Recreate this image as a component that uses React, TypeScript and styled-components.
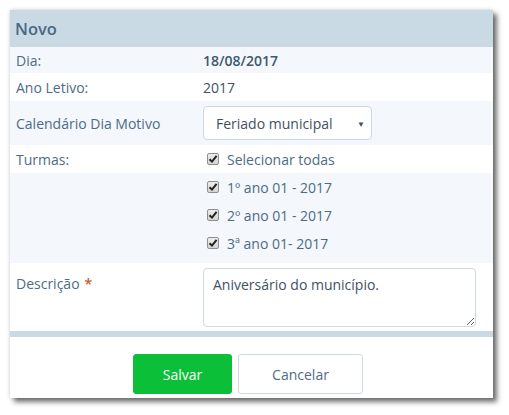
import React from "react";
import styled, { createGlobalStyle } from "styled-components";

const Global = createGlobalStyle`
  html, body { margin: 0; padding: 0; background: #ffffff; }
  body { font-family: "Open Sans", "Liberation Sans", sans-serif; }
  * { box-sizing: border-box; }
`;

const Page = styled.div`
  padding: 10px 16px 17px 10px;
  width: 509px;
`;

const Panel = styled.div`
  width: 483px;
  background: #ffffff;
  box-shadow: 4px 4px 5px rgba(0, 0, 0, 0.55), 0 0 4px rgba(0, 0, 0, 0.18);
`;

const Header = styled.div`
  height: 37px;
  background: #c9dae5;
  display: flex;
  align-items: center;
  padding-left: 5px;
  font-size: 16.5px;
  font-weight: 600;
  color: #4a6982;
`;

const Row = styled.div<{ $alt?: boolean; $h?: number; $pad?: string }>`
  display: grid;
  grid-template-columns: 193px 1fr;
  align-items: ${(p) => (p.$pad ? "start" : "center")};
  min-height: ${(p) => p.$h ?? 27}px;
  padding: ${(p) => p.$pad ?? "0"};
  background: ${(p) => (p.$alt ? "#f4f7fb" : "#ffffff")};
`;

const Label = styled.div<{ $top?: number }>`
  padding-left: 6px;
  font-size: 14px;
  color: #4e6b85;
  padding-top: ${(p) => p.$top ?? 0}px;
`;

const Value = styled.div<{ $bold?: boolean }>`
  font-size: 14px;
  color: ${(p) => (p.$bold ? "#3d5870" : "#3f5163")};
  font-weight: ${(p) => (p.$bold ? 600 : 400)};
`;

const Select = styled.div`
  width: 169px;
  height: 34px;
  border: 1px solid #ccd8e3;
  border-radius: 4px;
  background: #fff;
  display: flex;
  align-items: center;
  justify-content: space-between;
  padding: 0 6px 0 12px;
  font-size: 14px;
  color: #3f5163;
`;

const Arrow = styled.span`
  font-size: 8px;
  color: #3f5163;
`;

const CheckList = styled.div`
  display: flex;
  flex-direction: column;
`;

const CheckItem = styled.label`
  display: flex;
  align-items: center;
  gap: 8px;
  height: 28px;
  padding-left: 4px;
  font-size: 14px;
  color: #4e6b85;
`;

const Box = styled.span`
  width: 12px;
  height: 12px;
  border: 1px solid #8f8f8f;
  border-radius: 2px;
  background: linear-gradient(#ececec, #d4d4d4);
  display: inline-flex;
  align-items: center;
  justify-content: center;
`;

const Check = () => (
  <Box>
    <svg width="10" height="10" viewBox="0 0 10 10">
      <path d="M1.5 5.2 L4 7.6 L8.6 1.8" fill="none" stroke="#222" strokeWidth="2" />
    </svg>
  </Box>
);

const Required = styled.span`
  color: #c0642a;
  font-weight: 600;
  margin-left: 5px;
`;

const TextArea = styled.textarea`
  width: 273px;
  height: 59px;
  border: 1px solid #ccd8e3;
  border-radius: 4px;
  padding: 6px 9px;
  font-family: "Open Sans", "Liberation Sans", sans-serif;
  font-size: 14px;
  color: #3f5163;
  resize: both;
  display: block;
  outline: none;
`;

const Separator = styled.div`
  height: 6px;
  background: #c9dae5;
`;

const Footer = styled.div`
  height: 61px;
  display: flex;
  justify-content: center;
  align-items: flex-start;
  gap: 6px;
  padding-top: 17px;
  padding-right: 7px;
`;

const Button = styled.button<{ $primary?: boolean }>`
  height: 40px;
  width: ${(p) => (p.$primary ? 99 : 125)}px;
  border-radius: 3px;
  font-family: "Open Sans", "Liberation Sans", sans-serif;
  font-size: 14px;
  cursor: pointer;
  border: 1px solid ${(p) => (p.$primary ? "#0bbf38" : "#cfd9e3")};
  background: ${(p) => (p.$primary ? "#0bbf38" : "#ffffff")};
  color: ${(p) => (p.$primary ? "#ffffff" : "#4e6b85")};
`;

export default function App() {
  const turmas = ["1º ano 01 - 2017", "2º ano 01 - 2017", "3ª ano 01- 2017"];
  return (
    <>
      <Global />
      <Page>
        <Panel>
          <Header>Novo</Header>
          <Row $alt $h={26}>
            <Label>Dia:</Label>
            <Value $bold>18/08/2017</Value>
          </Row>
          <Row $h={28}>
            <Label>Ano Letivo:</Label>
            <Value>2017</Value>
          </Row>
          <Row $alt $h={44}>
            <Label>Calendário Dia Motivo</Label>
            <Select>
              <span>Feriado municipal</span>
              <Arrow>▼</Arrow>
            </Select>
          </Row>
          <Row $h={28}>
            <Label>Turmas:</Label>
            <CheckItem>
              <Check />
              Selecionar todas
            </CheckItem>
          </Row>
          <Row $alt $h={90} $pad="0 0 6px 0">
            <Label />
            <CheckList>
              {turmas.map((t) => (
                <CheckItem key={t}>
                  <Check />
                  {t}
                </CheckItem>
              ))}
            </CheckList>
          </Row>
          <Row $h={68} $pad="5px 0 4px 0">
            <Label $top={6}>
              Descrição<Required>*</Required>
            </Label>
            <TextArea defaultValue="Aniversário do município." />
          </Row>
          <Separator />
          <Footer>
            <Button $primary>Salvar</Button>
            <Button>Cancelar</Button>
          </Footer>
        </Panel>
      </Page>
    </>
  );
}
